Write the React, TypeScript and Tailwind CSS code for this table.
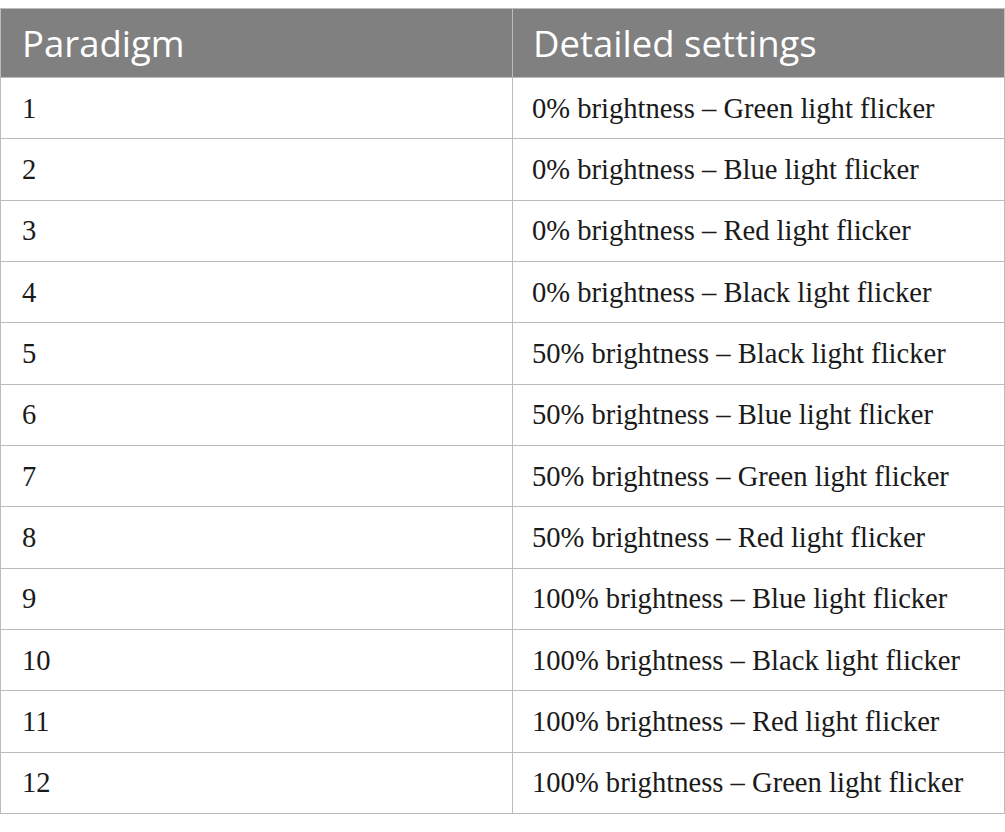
const rows: [string, string][] = [
  ['1', '0% brightness – Green light flicker'],
  ['2', '0% brightness – Blue light flicker'],
  ['3', '0% brightness – Red light flicker'],
  ['4', '0% brightness – Black light flicker'],
  ['5', '50% brightness – Black light flicker'],
  ['6', '50% brightness – Blue light flicker'],
  ['7', '50% brightness – Green light flicker'],
  ['8', '50% brightness – Red light flicker'],
  ['9', '100% brightness – Blue light flicker'],
  ['10', '100% brightness – Black light flicker'],
  ['11', '100% brightness – Red light flicker'],
  ['12', '100% brightness – Green light flicker'],
]

export default function App() {
  return (
    <div className="w-[1005px] h-[832px] bg-white pt-[8px]">
      <div className="border border-[#bcbcbc]">
        <div className="flex h-[68px] bg-[#7f807f] text-white text-[36.5px] font-['Open_Sans',sans-serif]">
          <div className="w-[512px] flex items-center pl-[21px] border-r border-[#bcbcbc]">Paradigm</div>
          <div className="flex-1 flex items-center pl-[20px]">Detailed settings</div>
        </div>
        {rows.map(([n, label]) => (
          <div
            key={n}
            className="flex h-[61.33px] border-t border-[#bcbcbc] text-[28.6px] text-[#1a1a1a] font-['Liberation_Serif',serif]"
          >
            <div className="w-[512px] flex items-center pl-[21px] pt-[2px] border-r border-[#bcbcbc]">{n}</div>
            <div className="flex-1 flex items-center pl-[19px] pt-[2px]">{label}</div>
          </div>
        ))}
      </div>
    </div>
  )
}
